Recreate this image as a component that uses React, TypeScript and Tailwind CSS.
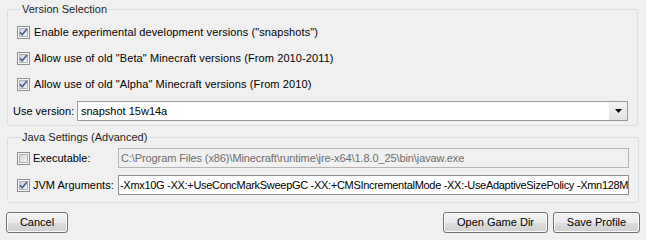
import React from "react";

function Check({ checked }: { checked: boolean }) {
  return (
    <svg width="13" height="13" viewBox="0 0 13 13" className="shrink-0">
      <defs>
        <linearGradient id={checked ? "cbg1" : "cbg0"} x1="0" y1="0" x2="1" y2="1">
          <stop offset="0" stopColor="#cbcfd5" />
          <stop offset="1" stopColor="#f7f7f7" />
        </linearGradient>
      </defs>
      <rect x="0.5" y="0.5" width="12" height="12" fill="#f4f4f4" stroke="#8e8f8f" />
      <rect x="2.5" y="2.5" width="8" height="8" fill={`url(#${checked ? "cbg1" : "cbg0"})`} stroke="#b3b5b8" strokeWidth="1" />
      {checked && (
        <path d="M3 6.2 L5.2 8.8 L10 3" fill="none" stroke="#4a5f97" strokeWidth="1.7" />
      )}
    </svg>
  );
}

function Btn({ label, w }: { label: string; w: string }) {
  return (
    <div
      className={`${w} h-[21px] flex items-center justify-center rounded-[3px] border border-[#707070] bg-[linear-gradient(to_bottom,#f2f2f2_0%,#ebebeb_50%,#dddddd_50%,#cfcfcf_100%)] shadow-[inset_0_0_0_1px_#fcfcfc] text-[11px] text-black`}
    >
      {label}
    </div>
  );
}

export default function App() {
  const font = { fontFamily: '"Liberation Sans", Arial, sans-serif' };
  return (
    <div
      className="w-[646px] h-[240px] bg-[#f0f0f0] px-[6px] pt-[2px] flex flex-col text-[11px] text-black overflow-hidden"
      style={font}
    >
      <fieldset className="ml-[1px] mr-[2px] border border-[#d5dfe5] rounded-[3px] px-[9px] pb-[4px]">
        <legend className="ml-[4px] px-[1px] h-[15px] leading-[15px] text-[#1e1e1e]">Version Selection</legend>
        <div className="flex flex-col gap-[6px] mt-[5px]">
          <div className="h-[20px] flex items-center gap-[4px]">
            <Check checked />
            <span className="tracking-[0.1px]">Enable experimental development versions ("snapshots")</span>
          </div>
          <div className="h-[20px] flex items-center gap-[4px]">
            <Check checked />
            <span className="tracking-[0.1px]">Allow use of old "Beta" Minecraft versions (From 2010-2011)</span>
          </div>
          <div className="h-[20px] flex items-center gap-[4px]">
            <Check checked />
            <span className="tracking-[0.1px]">Allow use of old "Alpha" Minecraft versions (From 2010)</span>
          </div>
        </div>
        <div className="mt-[7px] -ml-[4px] h-[20px] flex items-center">
          <span className="w-[64px]">Use version:</span>
          <div className="flex-1 h-[20px] border border-[#9a9a9a] bg-white flex items-center">
            <span className="flex-1 pl-[3px]">snapshot 15w14a</span>
            <div className="w-[18px] h-full flex items-center justify-center bg-[linear-gradient(to_bottom,#f4f4f4,#e2e2e2)]">
              <svg width="7" height="4" viewBox="0 0 7 4">
                <path d="M0 0 H7 L3.5 4 Z" fill="#000" />
              </svg>
            </div>
          </div>
        </div>
      </fieldset>

      <fieldset className="mt-[4px] ml-[1px] mr-[2px] border border-[#d5dfe5] rounded-[3px] px-[9px] pb-[7px]">
        <legend className="ml-[4px] px-[1px] h-[14px] leading-[14px] text-[#1e1e1e]">Java Settings (Advanced)</legend>
        <div className="flex flex-col gap-[7px] mt-[4px]">
          <div className="h-[20px] flex items-center">
            <div className="w-[101px] flex items-center gap-[3px]">
              <Check checked={false} />
              <span>Executable:</span>
            </div>
            <div className="flex-1 h-[20px] border border-[#b5b5b5] bg-[#f0f0f0] flex items-center pl-[2px] text-[#6d6d6d] overflow-hidden whitespace-nowrap tracking-[-0.1px]">
              C:\Program Files (x86)\Minecraft\runtime\jre-x64\1.8.0_25\bin\javaw.exe
            </div>
          </div>
          <div className="h-[20px] flex items-center">
            <div className="w-[101px] flex items-center gap-[3px]">
              <Check checked />
              <span>JVM Arguments:</span>
            </div>
            <div className="flex-1 h-[20px] border border-[#8f8f8f] bg-white flex items-center pl-[1px] overflow-hidden whitespace-nowrap tracking-[-0.3px]">
              -Xmx10G -XX:+UseConcMarkSweepGC -XX:+CMSIncrementalMode -XX:-UseAdaptiveSizePolicy -Xmn128M
            </div>
          </div>
        </div>
      </fieldset>

      <div className="mt-[9px] flex items-center">
        <Btn label="Cancel" w="w-[62px]" />
        <div className="flex-1" />
        <div className="flex gap-[5px]">
          <Btn label="Open Game Dir" w="w-[105px]" />
          <Btn label="Save Profile" w="w-[87px]" />
        </div>
      </div>
    </div>
  );
}
